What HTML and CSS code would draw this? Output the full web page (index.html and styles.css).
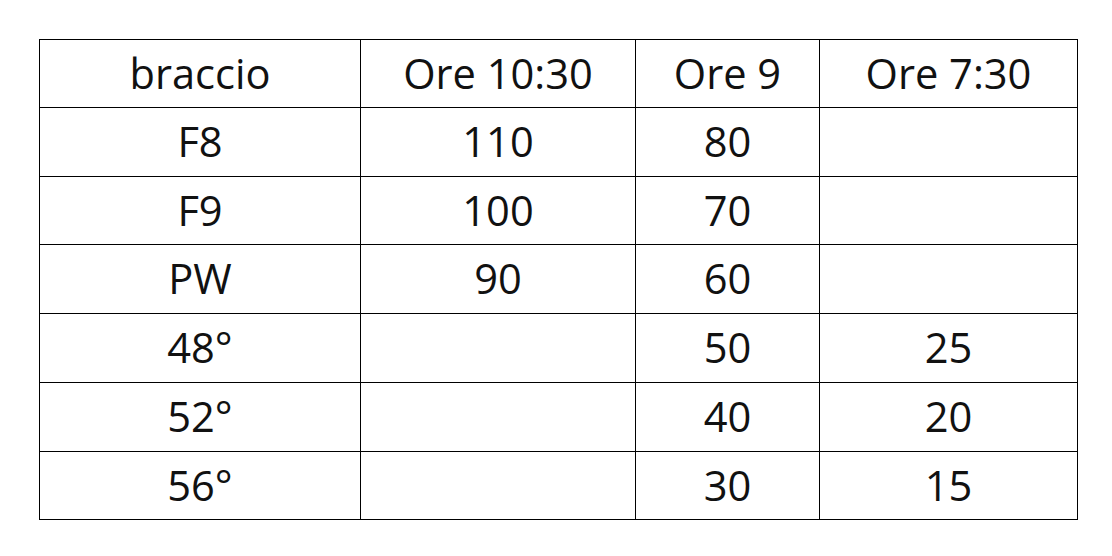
FILE: index.html
```html
<!DOCTYPE html>
<html lang="it">
<head>
<meta charset="utf-8">
<link rel="stylesheet" href="styles.css">
</head>
<body>
<div class="page">
  <div class="grid">
    <div class="cell">braccio</div>
    <div class="cell">Ore 10:30</div>
    <div class="cell">Ore 9</div>
    <div class="cell">Ore 7:30</div>

    <div class="cell">F8</div>
    <div class="cell">110</div>
    <div class="cell">80</div>
    <div class="cell"></div>

    <div class="cell">F9</div>
    <div class="cell">100</div>
    <div class="cell">70</div>
    <div class="cell"></div>

    <div class="cell">PW</div>
    <div class="cell">90</div>
    <div class="cell">60</div>
    <div class="cell"></div>

    <div class="cell">48°</div>
    <div class="cell"></div>
    <div class="cell">50</div>
    <div class="cell">25</div>

    <div class="cell">52°</div>
    <div class="cell"></div>
    <div class="cell">40</div>
    <div class="cell">20</div>

    <div class="cell">56°</div>
    <div class="cell"></div>
    <div class="cell">30</div>
    <div class="cell">15</div>
  </div>
</div>
</body>
</html>
```
FILE: styles.css
```css
html, body {
  margin: 0;
  padding: 0;
  background: #fff;
}
.page {
  padding: 39px 0 0 39px;
}
.grid {
  display: grid;
  width: max-content;
  grid-template-columns: 320px 274px 183px 257px;
  grid-template-rows: 67px 68px 67px 68px 68px 68px 67px;
  gap: 1px;
  padding: 1px;
  background: #000;
  font-family: "Open Sans", "Noto Sans", sans-serif;
  font-size: 41.6px;
  color: #111;
}
.cell {
  background: #fff;
  display: flex;
  align-items: center;
  justify-content: center;
  line-height: 1;
}
```
